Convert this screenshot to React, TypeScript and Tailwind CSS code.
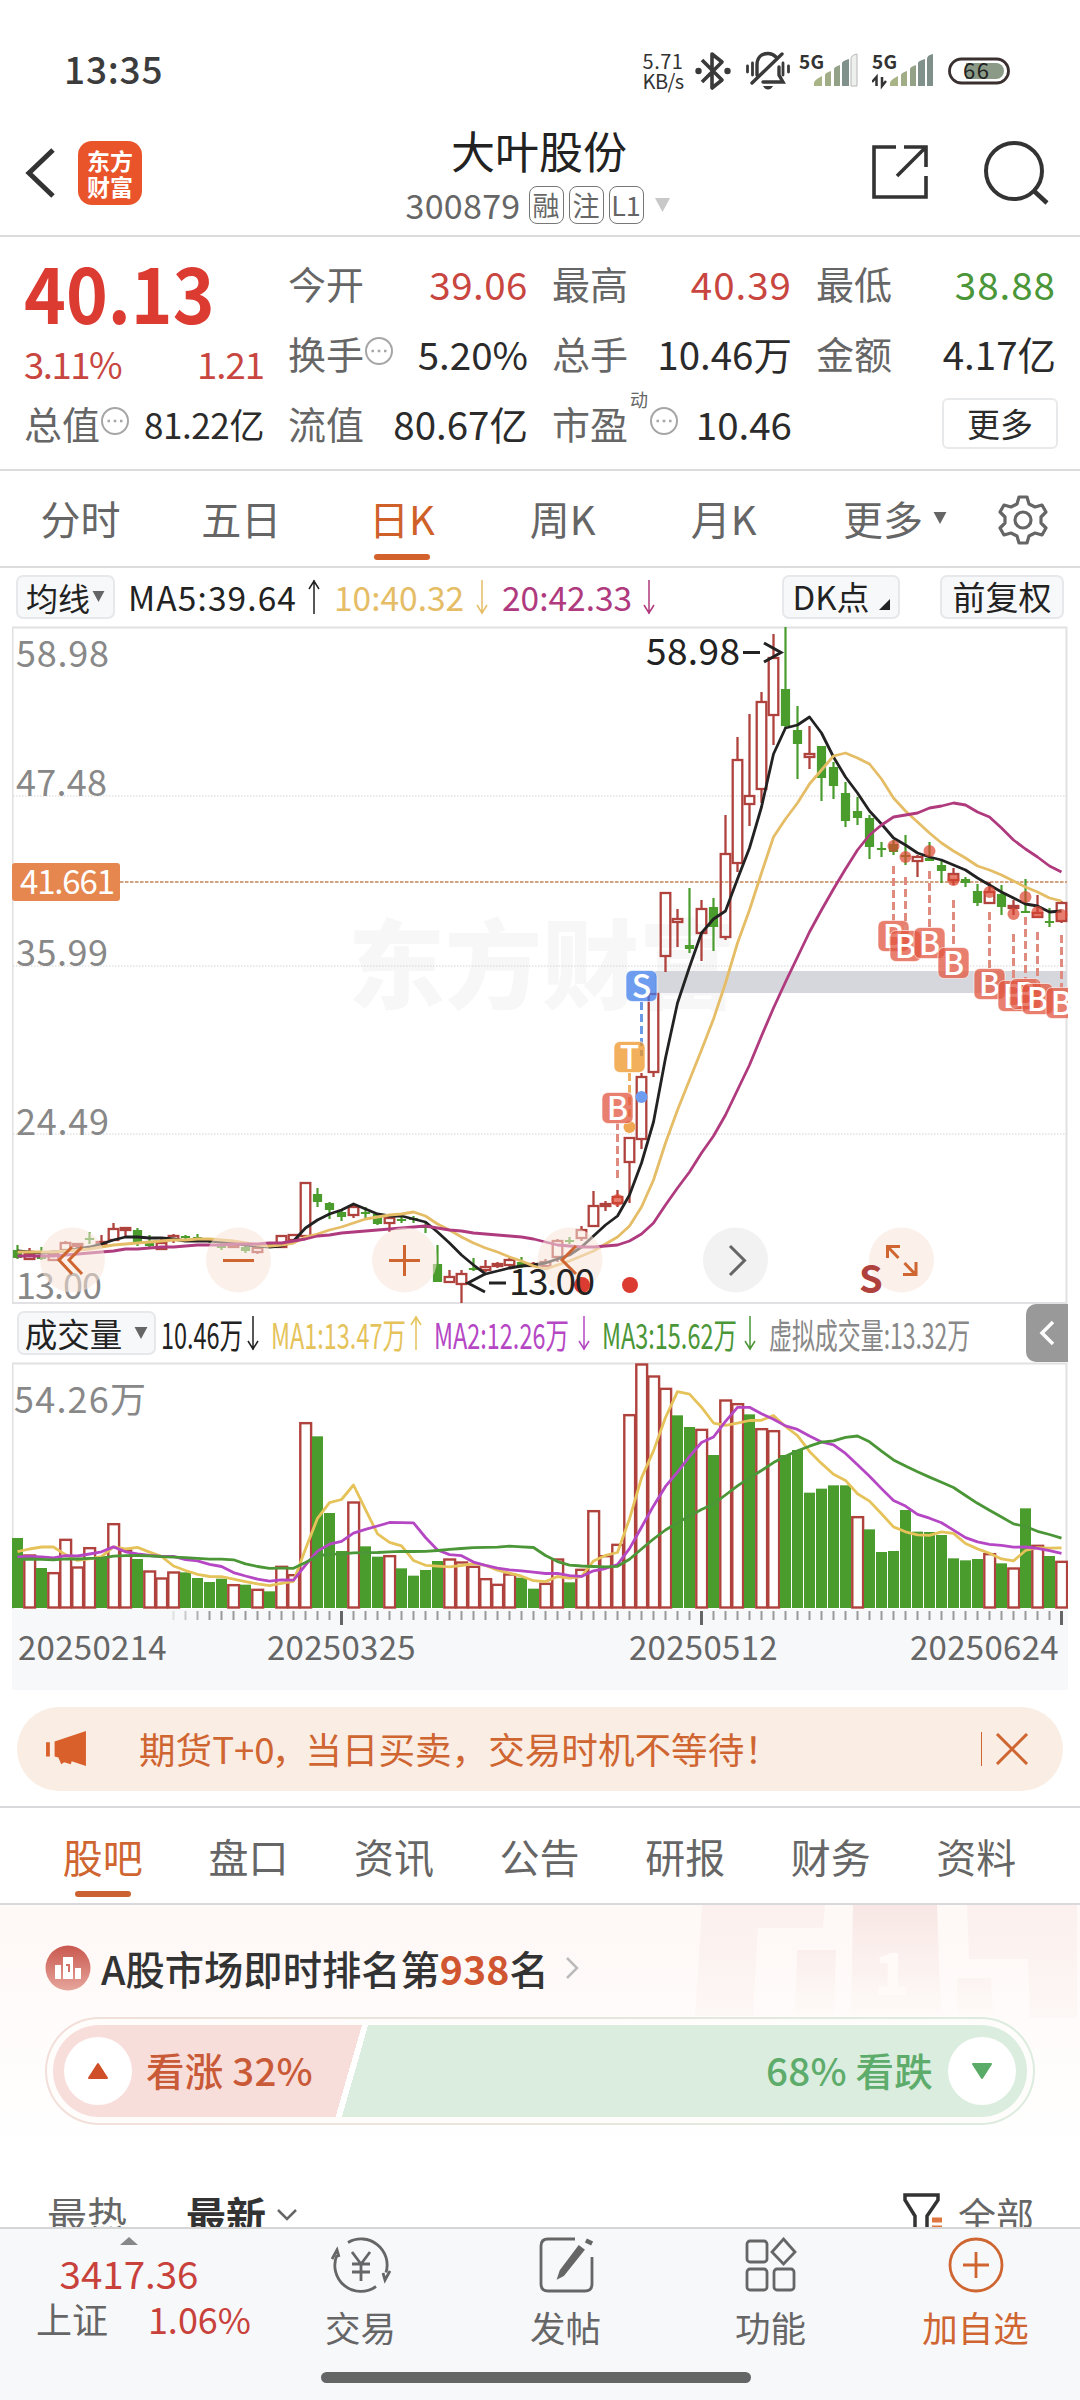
import { Fragment, type ReactNode } from 'react'
import { clsx } from 'clsx'

const RED = '#b0423d'
const GREEN = '#4a9d2d'

// x centre of the n-th trading day
const dayX = (i: number) => 17.5 + i * 12

// [high, body top, body bottom, low] per day
const candles = [
  [1245, 1250, 1258, 1259], [1248, 1254, 1259, 1260], [1247, 1257, 1259, 1260], [1252, 1254, 1260, 1260],
  [1241, 1243, 1250, 1252], [1243, 1244, 1246, 1252], [1232, 1238, 1240, 1244], [1235, 1242, 1244, 1248],
  [1223, 1229, 1240, 1240], [1227, 1228, 1230, 1237], [1228, 1230, 1244, 1246], [1235, 1243, 1246, 1247],
  [1237, 1243, 1249, 1249], [1234, 1236, 1239, 1243], [1235, 1236, 1238, 1242], [1234, 1237, 1239, 1241],
  [1238, 1240, 1242, 1243], [1242, 1245, 1248, 1250], [1243, 1245, 1247, 1248], [1246, 1247, 1251, 1253],
  [1245, 1248, 1252, 1254], [1243, 1244, 1246, 1248], [1235, 1236, 1247, 1247], [1234, 1235, 1240, 1243],
  [1183, 1183, 1236, 1236], [1188, 1194, 1202, 1207], [1202, 1203, 1210, 1219], [1211, 1212, 1217, 1221],
  [1205, 1207, 1215, 1218], [1207, 1212, 1213, 1218], [1214, 1214, 1224, 1225], [1215, 1218, 1223, 1232],
  [1215, 1219, 1221, 1223], [1216, 1218, 1220, 1223], [1222, 1226, 1227, 1233], [1245, 1264, 1282, 1282],
  [1270, 1277, 1282, 1283], [1270, 1274, 1284, 1303], [1258, 1268, 1270, 1271], [1260, 1267, 1270, 1272],
  [1262, 1264, 1266, 1268], [1257, 1260, 1265, 1267], [1257, 1262, 1267, 1268], [1262, 1264, 1266, 1267],
  [1259, 1262, 1266, 1267], [1239, 1241, 1257, 1262], [1237, 1240, 1241, 1244], [1226, 1230, 1238, 1241],
  [1191, 1206, 1226, 1227], [1201, 1204, 1206, 1211], [1190, 1197, 1203, 1207], [1138, 1138, 1162, 1203],
  [1073, 1077, 1139, 1149], [994, 994, 1072, 1077], [893, 893, 956, 972], [909, 919, 922, 947],
  [888, 945, 949, 953], [900, 909, 933, 961], [898, 907, 927, 951], [815, 854, 937, 940],
  [737, 760, 863, 872], [714, 796, 804, 826], [692, 702, 789, 803], [634, 658, 715, 745],
  [627, 689, 726, 728], [706, 730, 744, 779], [726, 754, 757, 769], [746, 746, 778, 801],
  [762, 767, 786, 799], [782, 793, 821, 827], [797, 811, 818, 825], [815, 818, 847, 859],
  [842, 848, 850, 857], [840, 844, 852, 855], [835, 855, 856, 865], [855, 857, 861, 877],
  [842, 858, 861, 861], [859, 865, 871, 883], [868, 874, 880, 885], [877, 879, 883, 887],
  [884, 891, 903, 906], [882, 892, 903, 904], [885, 894, 907, 915], [900, 906, 908, 915],
  [879, 911, 913, 913], [895, 913, 917, 918], [908, 921, 922, 927], [901, 903, 921, 923],
]
// r = rising (hollow), g = falling (solid), ten days per group
const candleSide = ['grgrrrgrrr', 'ggrrggggrg', 'rgrrrgggrg', 'grggggrrgr', 'rrgrrrgrrr', 'rrrrrrgrgr', 'rrrrggrggg', 'gggggrggrg', 'grgrgrgr'].join('')

const ma5 = [
  1251, 1252, 1253, 1252, 1251, 1249, 1247, 1244, 1240, 1237, 1237, 1238, 1238, 1239, 1241, 1241, 1241, 1242, 1243,
  1245, 1246, 1247, 1246, 1241, 1228, 1220, 1214, 1210, 1204, 1209, 1214, 1216, 1216, 1219, 1222, 1232, 1243, 1255,
  1265, 1274, 1271, 1268, 1266, 1265, 1263, 1259, 1255, 1247, 1236, 1225, 1216, 1195, 1163, 1122, 1058, 1003, 967,
  933, 919, 911, 879, 848, 807, 754, 728, 725, 717, 733, 757, 777, 793, 811, 824, 838, 845, 853, 857, 860, 865, 870,
  878, 885, 892, 898, 904, 906, 912, 911,
]
const ma10 = [
  1252, 1252, 1252, 1252, 1251, 1250, 1249, 1247, 1245, 1244, 1243, 1242, 1241, 1240, 1240, 1239, 1239, 1240, 1241,
  1243, 1245, 1246, 1245, 1243, 1237, 1234, 1230, 1227, 1223, 1219, 1217, 1215, 1214, 1212, 1216, 1224, 1230, 1237,
  1243, 1248, 1252, 1257, 1261, 1266, 1269, 1265, 1261, 1256, 1251, 1244, 1237, 1226, 1207, 1180, 1143, 1110, 1080,
  1050, 1019, 983, 943, 910, 873, 837, 819, 803, 784, 770, 756, 753, 758, 764, 779, 798, 811, 822, 833, 843, 851, 858,
  866, 870, 875, 881, 887, 892, 898, 901,
]
const ma20 = [
  1256, 1256, 1256, 1256, 1255, 1254, 1253, 1252, 1251, 1249, 1249, 1248, 1247, 1247, 1246, 1245, 1245, 1245, 1244,
  1244, 1244, 1243, 1243, 1241, 1239, 1236, 1235, 1233, 1232, 1231, 1230, 1229, 1228, 1227, 1226, 1228, 1230, 1231,
  1233, 1234, 1235, 1236, 1237, 1239, 1242, 1245, 1246, 1247, 1247, 1246, 1245, 1241, 1234, 1223, 1205, 1188, 1172,
  1153, 1136, 1115, 1090, 1065, 1036, 1008, 982, 957, 932, 910, 889, 869, 850, 835, 825, 817, 815, 813, 808, 806, 803,
  805, 812, 817, 828, 840, 849, 857, 866, 872,
]

// volume bar tops in thirds of a pixel, preceded by the sessions left of the visible window
const volumeHistory = [635, 635, 635, 635, 635, 635, 635, 635, 635, 635, 637, 637, 637, 637, 637, 655, 684, 668, 454]
const volumes = [
  564, 615, 654, 668, 568, 651, 593, 620, 521, 600, 627, 663, 684, 666, 667, 684, 696, 686, 704, 704, 718, 724, 649,
  674, 218, 259, 489, 603, 456, 589, 620, 617, 655, 677, 660, 633, 627, 636, 649, 686, 703, 672, 683, 716, 700, 627,
  697, 658, 482, 617, 583, 194, 42, 78, 115, 196, 231, 238, 315, 150, 161, 193, 236, 242, 315, 300, 428, 416, 406,
  406, 500, 538, 606, 603, 480, 545, 546, 555, 625, 631, 627, 611, 640, 654, 475, 586, 618, 634,
]
const volumeSide = ['grgrrrrgrr', 'grrrggggrg', 'rgrrrgggrg', 'grggggrrrr', 'rrggrrgrrr', 'rrrrrggrgr', 'rgrrgggggg', 'rggggggggg', 'grgrgrgr'].join('')

const volumeMa = (n: number) => {
  const all = [...volumeHistory, ...volumes]
  return volumes.map((_, i) => {
    const end = i + volumeHistory.length + 1
    return 1350 + all.slice(end - n, end).reduce((a, b) => a + b, 0) / n / 3
  })
}

const toPoints = (ys: number[]) => ys.map((y, i) => `${dayX(i)},${y.toFixed(1)}`).join(' ')

// [day, dot y, badge y]
const buyMarks = [
  [50, 1200, 1108], [73, 846, 936], [74, 857, 946], [76, 851, 943], [78, 880, 963],
  [81, 892, 984], [83, 914, 996], [84, 897, 994], [85, 912, 999], [87, 915, 1003],
]

function Mark({ x, y, letter, color }: { x: number; y: number; letter: string; color: string }) {
  return (
    <g>
      <rect x={x - 15.5} y={y - 15.5} width="31" height="31" rx="6" fill={color} fillOpacity="0.75" stroke="#fff" strokeOpacity="0.6" />
      <text x={x} y={y + 11.5} textAnchor="middle" fontSize="32" fontWeight="500" fill="#fff">{letter}</text>
    </g>
  )
}

function PriceChart() {
  return (
    <svg className="mx-3 block h-[678px] w-[1056px] shrink-0" viewBox="12 626 1056 678">
      <text x="348" y="1001" fontSize="97" fontWeight="900" fill="#f7f7f7">东方财富</text>
      <path d="M12.5 627.5H1066.5V1303H12.5Z" fill="none" stroke="#e1e1e3" strokeWidth="2" />
      {[796, 966, 1134].map((y) => (
        <line key={y} x1="13" x2="1067" y1={y} y2={y} stroke="#d4d4d4" strokeDasharray="1.5 1.5" />
      ))}
      <rect x="655" y="971" width="412" height="22" fill="#d6d7dc" />
      <line x1="120" x2="1067" y1="882" y2="882" stroke="#d3a27e" strokeWidth="1.8" strokeDasharray="3.5 1.5" />

      {/* candles */}
      {candles.map(([high, top, bottom, low], i) => {
        const x = dayX(i)
        const up = candleSide[i] === 'r'
        const h = Math.max(bottom - top, 2)
        return up ? (
          <g key={i} fill="none" stroke={RED} strokeWidth="2.3">
            <path d={`M${x} ${high}V${top}M${x} ${bottom}V${low}`} />
            <rect x={x - 4.8} y={top} width="9.6" height={h} />
          </g>
        ) : (
          <g key={i} fill={GREEN}>
            <rect x={x - 1.1} y={high} width="2.2" height={low - high} />
            <rect x={x - 4.6} y={top} width="9.2" height={h} />
          </g>
        )
      })}

      <g fill="none" strokeWidth="2.8" strokeLinejoin="round">
        <polyline points={toPoints(ma5)} stroke="#222" />
        <polyline points={toPoints(ma10)} stroke="#e5bd66" />
        <polyline points={toPoints(ma20)} stroke="#b03a7e" />
      </g>

      {/* trade marks */}
      <line x1={dayX(52)} x2={dayX(52)} y1="1002" y2="1056" stroke="#6d9ae6" strokeWidth="3" strokeDasharray="8 4" />
      <line x1={dayX(51)} x2={dayX(51)} y1="1073" y2="1125" stroke="#eeb060" strokeWidth="3" strokeDasharray="8 4" />
      <circle cx={dayX(52)} cy="1097" r="6" fill="#6c9df0" />
      <circle cx={dayX(51)} cy="1127" r="6" fill="#efa751" />
      {buyMarks.map(([day, dot, badge]) => (
        <g key={day}>
          <line
            x1={dayX(day)}
            x2={dayX(day)}
            y1={badge > dot ? dot + 20 : dot - 22}
            y2={badge > dot ? badge - 15 : badge + 15}
            stroke="#df8b7f"
            strokeWidth="3"
            strokeDasharray="8 4"
          />
          <circle cx={dayX(day)} cy={dot} r="6" fill="#dc4631" fillOpacity="0.7" />
          <Mark x={dayX(day)} y={badge} letter="B" color="#e2553f" />
        </g>
      ))}
      <Mark x={dayX(52)} y={986} letter="S" color="#3d7ceb" />
      <Mark x={dayX(51)} y={1057} letter="T" color="#ee9525" />

      {/* axis labels */}
      <g fontSize="36" fill="#888">
        <text x="16" y="667" textLength="93">58.98</text>
        <text x="16" y="796" textLength="91">47.48</text>
        <text x="16" y="966" textLength="92">35.99</text>
        <text x="16" y="1135" textLength="93">24.49</text>
        <text x="16" y="1299" textLength="86">13.00</text>
      </g>
      <rect x="12" y="863" width="108" height="38" rx="3" fill="#e6874f" />
      <text x="20" y="894" fontSize="33" fill="#fff" textLength="95">41.661</text>

      {/* floating controls */}
      <g fill="#f7e3d8" fillOpacity="0.55">
        {[72.5, 238.5, 404.5, 570, 901.5].map((x) => <circle key={x} cx={x} cy="1260" r="32.5" />)}
      </g>
      <circle cx="735.5" cy="1260" r="32.5" fill="#f2f2f2" />
      <g fill="none" stroke="#cf6531" strokeWidth="3">
        <path d="M72 1247L59 1260L72 1274M82 1247L69 1260L82 1274" />
        <path d="M223 1260.5H254M389 1260.5H420M404.5 1245V1276" />
        <path d="M576 1246L562 1260L576 1274" />
        <path d="M887.5 1258V1246.5H900M888 1247L898.5 1258M916 1262V1274.5H903M915 1274L904.5 1263" />
      </g>
      <path d="M730 1246L744.5 1260.5L730 1275" fill="none" stroke="#666" strokeWidth="3" />
      <circle cx="582" cy="1285" r="8" fill="#dc3b31" />
      <circle cx="630" cy="1285" r="8" fill="#dc3b31" />
      <text x="859" y="1293" fontSize="38" fontWeight="700" fill={RED}>S</text>

      {/* high and low callouts */}
      <g fontSize="37" fill="#222">
        <text x="646" y="665" textLength="94">58.98</text>
        <text x="509" y="1295" textLength="86">13.00</text>
        <g fill="none" stroke="#222" strokeWidth="3">
          <path d="M743 652.5H760M764 643L781 652.5L764 662M506 1283H489M485 1274L468 1283L485 1292" />
        </g>
      </g>
    </svg>
  )
}

function VolumeChart() {
  return (
    <svg className="mx-3 block h-[247px] w-[1056px] shrink-0" viewBox="12 1362 1056 247">
      <path d="M12.5 1609V1363.5H1066.5V1609" fill="none" stroke="#e1e1e3" strokeWidth="2" />
      <text x="14" y="1413" fontSize="36" fill="#888" textLength="132">54.26万</text>
      {volumes.map((v, i) => {
        const y = 1350 + v / 3
        return volumeSide[i] === 'r' ? (
          <rect key={i} x={dayX(i) - 5.2} y={y + 0.5} width="10.8" height={1607 - y} fill="#fff" stroke={RED} strokeWidth="2.4" />
        ) : (
          <rect key={i} x={dayX(i) - 5.5} y={y} width="11" height={1608 - y} fill={GREEN} />
        )
      })}
      <g fill="none" strokeWidth="2.8" strokeLinejoin="round">
        <polyline points={toPoints(volumeMa(5))} stroke="#e5c35a" />
        <polyline points={toPoints(volumeMa(10))} stroke="#b547c4" />
        <polyline points={toPoints(volumeMa(20))} stroke="#4b9637" />
      </g>
    </svg>
  )
}

function DateAxis() {
  return (
    <div className="mx-3 flex h-[81px] w-[1056px] shrink-0 flex-col bg-[#f7f8fa]">
      <svg className="block h-[18px] w-full" viewBox="12 1609 1056 18">
        {volumes.map((_, i) => {
          const major = i === 27 || i === 57 || i === 87
          return i < 13 ? null : (
            <rect
              key={i}
              x={dayX(i) - (major ? 1.5 : 1)}
              y="1611"
              width={major ? 3 : 2}
              height={major ? 14 : 9}
              fill={major ? '#666' : '#999'}
              opacity={i < 16 ? (i - 12) * 0.25 : 1}
            />
          )
        })}
      </svg>
      <div className="flex h-[38px] items-center pr-2 pl-[6px] text-[33px] leading-none tracking-[0.3px] text-[#666]">
        <span className="w-[249px]">20250214</span>
        <span className="w-[362px]">20250325</span>
        <span className="w-[281px]">20250512</span>
        <span>20250624</span>
      </div>
    </div>
  )
}

function Arrow({ up, className }: { up?: boolean; className?: string }) {
  return (
    <svg className={clsx('h-[38px] w-[14px] shrink-0', className)} viewBox="0 0 14 38" fill="none" stroke="currentColor" strokeWidth="1.5">
      <path d={up ? 'M7 36V2M2 11L7 3L12 11' : 'M7 2V36M2 27L7 35L12 27'} />
    </svg>
  )
}

function Caret({ className }: { className?: string }) {
  return (
    <svg className={className} viewBox="0 0 14 13" fill="currentColor">
      <path d="M0 0H14L7 13Z" />
    </svg>
  )
}

function More() {
  return (
    <svg className="-mt-[5px] h-[30px] w-[30px]" viewBox="0 0 30 30" fill="none" stroke="#a6a6a6" strokeWidth="2">
      <circle cx="15" cy="15" r="13" />
      <path d="M7.5 15H10M13.7 15H16.3M20 15H22.5" strokeWidth="2.6" />
    </svg>
  )
}

const signalBars = [
  'M0 32V29Q0 26 8 22V32Z',
  'M11 32V21Q11 19 17 17V32Z',
  'M20 32V15Q20 13 26 11V32Z',
  'M28 32V9Q28 7 35 5V32Z',
  'M37 32V5Q37 1 43 0V32Z',
]
const barColors = ['#a9b486', '#a1ad86', '#93a187', '#80908a', '#7f8f89']

function Signal({ level }: { level: number }) {
  return (
    <svg className="h-[38px] w-[62px]" viewBox="0 0 62 38">
      <text x="0" y="17" fontSize="19" fontWeight="700" fill="#333" textLength="25">5G</text>
      <g transform={level === 5 ? 'translate(18 2)' : 'translate(15 2)'}>
        {signalBars.map((d, i) => (
          <path key={d} d={d} fill={i < level ? barColors[i] : '#eef0ee'} stroke={i < level ? 'none' : '#b5b8b5'} />
        ))}
      </g>
      {level === 5 && <path d="M4.5 34V25L0 30M10 25V34L14 29" stroke="#333" strokeWidth="2.5" fill="none" />}
    </svg>
  )
}

function StatusBar() {
  return (
    <header className="flex h-[104px] shrink-0 items-end pr-[70px] pl-[64px]">
      <span className="mb-[17px] text-[37px] leading-none font-medium tracking-[0.8px] text-[#3c3c3c]">13:35</span>
      <div className="mb-[13px] ml-auto flex items-center text-[#333]">
        <div className="w-[46px] text-center text-[20px] leading-[20px]">
          <div className="tracking-[0.5px]">5.71</div>
          <div className="tracking-[-0.6px]">KB/s</div>
        </div>
        <svg className="ml-[9px] h-[40px] w-[36px]" viewBox="0 0 36 40" fill="none" stroke="#3a3a3a" strokeWidth="3.6" strokeLinejoin="round">
          <path d="M7 9L27 29L17 37V3L27 11L7 31" />
          <circle cx="3.5" cy="20" r="3.2" fill="#3a3a3a" stroke="none" />
          <circle cx="32.5" cy="20" r="3.2" fill="#3a3a3a" stroke="none" />
        </svg>
        <svg className="ml-[15px] h-[40px] w-[44px]" viewBox="0 0 44 40" fill="none" stroke="#3a3a3a" strokeWidth="3.4" strokeLinecap="round">
          <path d="M36 3L6 32M11 24V14C11 6 16 2.5 22 2.5C25 2.5 28 4 30 6M33 16V24L37 31H17" />
          <path d="M1.5 15V21M6.5 12V24M37 12V24M42.5 15V21" strokeWidth="2.8" />
          <path d="M17 35H27Q25 38.5 22 38.5T17 35Z" fill="#3a3a3a" stroke="none" />
        </svg>
        <span className="ml-[9px] w-[60px]"><Signal level={4} /></span>
        <span className="ml-[13px] w-[62px]"><Signal level={5} /></span>
        <svg className="ml-[14px] h-[28px] w-[62px]" viewBox="0 0 62 28">
          <rect x="1.5" y="2" width="59" height="24" rx="12" fill="#fff" stroke="#3a3030" strokeWidth="2.8" />
          <path d="M18 6H48A8 8 0 0 1 48 22H18Z" fill="#8a9a86" />
          <text x="15" y="22" fontSize="22" fill="#222" textLength="26">66</text>
        </svg>
      </div>
    </header>
  )
}

function TitleBar() {
  return (
    <div className="flex h-[133px] shrink-0 items-center border-b-2 border-[#dcdcdc] px-[24px]">
      <svg className="mt-[6px] h-[52px] w-[34px]" viewBox="0 0 34 52" fill="none" stroke="#333" strokeWidth="5">
        <path d="M29 3L5 26L29 49" />
      </svg>
      <div className="mt-[6px] ml-[20px] flex h-[64px] w-[64px] flex-col items-center justify-center rounded-[14px] bg-[#e9542a] text-[23px] leading-[26px] font-bold text-white">
        <span>东方</span>
        <span>财富</span>
      </div>
      <div className="ml-[244px] flex w-[306px] flex-col items-center pt-[8px]">
        <h1 className="text-[44px] leading-[54px] text-[#222]">大叶股份</h1>
        <div className="mt-[8px] flex items-center gap-[5px] text-[#666]">
          <span className="mr-[3px] text-[34px] leading-[40px] tracking-[0.3px]">300879</span>
          {['融', '注', 'L1'].map((tag) => (
            <span key={tag} className="flex h-[38px] w-[35px] items-center justify-center rounded-[8px] border border-[#777] text-[27px] leading-none">
              {tag}
            </span>
          ))}
          <Caret className="ml-[3px] h-[14px] w-[21px] text-[#c8c8c8]" />
        </div>
      </div>
      <svg className="mt-[5px] ml-auto h-[58px] w-[60px]" viewBox="0 0 60 58" fill="none" stroke="#333" strokeWidth="3.6">
        <path d="M26 4H4V54H56V33M34 4H56V24M55 5L27 33" />
      </svg>
      <svg className="mt-[6px] mr-[6px] ml-[52px] h-[66px] w-[68px]" viewBox="0 0 68 66" fill="none" stroke="#333" strokeWidth="4">
        <circle cx="32" cy="31" r="28" />
        <path d="M52 51L65 63" strokeWidth="4.5" />
      </svg>
    </div>
  )
}

function Cell({ label, value, tone = 'text-[#2b2b2b]', children }: { label: string; value: string; tone?: string; children?: ReactNode }) {
  return (
    <div className="flex h-[70px] w-[240px] items-center">
      <span className="text-[38px] leading-none text-[#666]">{label}</span>
      {children}
      <span className={clsx('ml-auto text-[38.5px] leading-none whitespace-nowrap', tone)}>{value}</span>
    </div>
  )
}

function Quote() {
  return (
    <section className="flex h-[234px] shrink-0 border-b-2 border-[#dcdcdc] pt-[11px] pl-[24px]">
      <div className="w-[240px]">
        <div className="flex h-[88px] items-center text-[78px] leading-none font-bold text-[#dc3b31]">
          <span className="-mt-[4px] origin-left scale-x-[0.91]">40.13</span>
        </div>
        <div className="mt-[4px] flex h-[48px] items-center justify-between text-[36.5px] leading-none text-[#c8463f]">
          <span className="tracking-[-1.5px]">3.11%</span>
          <span className="tracking-[-1px]">1.21</span>
        </div>
        <div className="flex h-[70px] items-center">
          <span className="text-[38px] leading-none text-[#666]">总值</span>
          <More />
          <span className="ml-auto text-[35px] leading-none tracking-[-0.4px] whitespace-nowrap text-[#2b2b2b]">81.22亿</span>
        </div>
      </div>
      <div className="ml-[24px] flex w-[768px] flex-wrap content-start gap-x-[24px]">
        <Cell label="今开" value="39.06" tone="text-[#c8463f] tracking-[0.5px]" />
        <Cell label="最高" value="40.39" tone="text-[#c8463f] tracking-[1px]" />
        <Cell label="最低" value="38.88" tone="text-[#4a9638] tracking-[1px]" />
        <Cell label="换手" value="5.20%"><More /></Cell>
        <Cell label="总手" value="10.46万" />
        <Cell label="金额" value="4.17亿" />
        <Cell label="流值" value="80.67亿" />
        <Cell label="市盈" value="10.46">
          <sup className="-mt-[30px] mr-px ml-[2px] text-[18px] leading-none text-[#666]">动</sup>
          <More />
        </Cell>
        <div className="flex h-[70px] w-[240px] items-center justify-end">
          <button className="-mr-[2px] flex h-[51px] w-[116px] items-center justify-center rounded-[6px] border-2 border-[#e8e9eb] text-[33px] leading-none text-[#2b2b2b]">更多</button>
        </div>
      </div>
    </section>
  )
}

function PeriodTabs() {
  return (
    <nav className="flex h-[97px] shrink-0 items-start border-b-2 border-[#dcdcdc] text-[40px] text-[#666]">
      {['分时', '五日', '日K', '周K', '月K'].map((t) => (
        <div key={t} className={clsx('flex w-[160.8px] flex-col items-center pt-[22px]', t === '日K' && 'text-[#cf6029]')}>
          <span className="leading-[50px]">{t}</span>
          {t === '日K' && <span className="mt-[11px] h-[6px] w-[56px] rounded-full bg-[#d3612c]" />}
        </div>
      ))}
      <div className="ml-[39px] flex items-center pt-[22px]">
        <span className="leading-[50px]">更多</span>
        <Caret className="ml-[10px] h-[12px] w-[14px]" />
      </div>
      <svg className="mt-[23px] mr-[31px] ml-auto h-[52px] w-[52px]" viewBox="0 0 52 52" fill="none" stroke="#666" strokeWidth="3.2" strokeLinejoin="round">
        <path d="M22 3H30L32 10L38 13L45 11L49 18L44 23V29L49 34L45 41L38 39L32 42L30 49H22L20 42L14 39L7 41L3 34L8 29V23L3 18L7 11L14 13L20 10Z" />
        <circle cx="26" cy="26" r="8" />
      </svg>
    </nav>
  )
}

const chip = 'flex h-[44px] items-center justify-center rounded-[7px] border-2 border-[#e6e8eb] bg-[#f7f8fa] leading-none text-[#222]'

function AverageRow() {
  return (
    <div className="flex h-[58px] shrink-0 items-center pr-[16px] pb-px pl-[16px] text-[33.5px] leading-none whitespace-nowrap">
      <button className={clsx(chip, 'w-[99px] text-[32px]')}>
        均线<Caret className="ml-[2px] h-[11px] w-[13px] text-[#666]" />
      </button>
      <span className="ml-[13px] w-[171px] tracking-[1.1px] text-[#222]">MA5:39.64</span>
      <Arrow up className="ml-[8px] text-[#222]" />
      <span className="ml-[13px] w-[135px] text-[#e5bd66]">10:40.32</span>
      <Arrow className="ml-[6px] text-[#e5bd66]" />
      <span className="ml-[13px] w-[138px] text-[#b03a7e]">20:42.33</span>
      <Arrow className="ml-[2px] text-[#b03a7e]" />
      <button className={clsx(chip, 'ml-auto w-[118px] text-[33px]')}>
        DK点
        <svg className="mt-[16px] ml-[9px] h-[11px] w-[11px]" viewBox="0 0 11 11"><path d="M11 0V11H0Z" fill="#222" /></svg>
      </button>
      <button className={clsx(chip, 'ml-[40px] w-[124px] text-[33px]')}>前复权</button>
    </div>
  )
}

const volumeStats = [
  { text: '10.46万', box: 'w-[85px]', tone: 'text-[#222]', up: false },
  { text: 'MA1:13.47万', box: 'w-[138px]', tone: 'text-[#e5c35a]', up: true },
  { text: 'MA2:12.26万', box: 'w-[143px]', tone: 'text-[#b547c4]', up: false },
  { text: 'MA3:15.62万', box: 'w-[141px]', tone: 'text-[#4b9637]', up: false },
]

function VolumeRow() {
  return (
    <div className="flex h-[58px] shrink-0 items-center pl-[17px] text-[35px] leading-none whitespace-nowrap">
      <button className={clsx(chip, 'mr-[5px] w-[139px] text-[32.5px]')}>
        成交量<Caret className="ml-[12px] h-[12px] w-[14px] text-[#666]" />
      </button>
      {volumeStats.map((s) => (
        <Fragment key={s.text}>
          <span className={clsx('shrink-0', s.box, s.tone)}>
            <span className="inline-block origin-left scale-x-[0.67]">{s.text}</span>
          </span>
          <Arrow up={s.up} className={clsx('mr-[11px]', s.tone)} />
        </Fragment>
      ))}
      <span className="ml-px w-[240px] text-[#888]">
        <span className="inline-block origin-left scale-x-[0.655]">虚拟成交量:13.32万</span>
      </span>
      <span className="mr-[12px] ml-auto flex h-[58px] w-[42px] shrink-0 items-center justify-center rounded-l-[10px] bg-[#999]">
        <svg className="h-[26px] w-[16px]" viewBox="0 0 16 26" fill="none" stroke="#fff" strokeWidth="3.5">
          <path d="M14 2L3 13L14 24" />
        </svg>
      </span>
    </div>
  )
}

function Banner() {
  return (
    <div className="mx-[17px] mt-[17px] flex h-[84px] shrink-0 items-center rounded-full bg-[#faede4] pr-[34px] pl-[27px] text-[#cf6531]">
      <svg className="h-[38px] w-[44px]" viewBox="0 0 44 40" fill="#d9602b">
        <path d="M1 13H5V28H1ZM10 12L43 1V38L28 33L27 36L20 34L17 36L14 29L10 28Z" />
      </svg>
      <span className="ml-[51px] text-[36.6px] leading-none">期货T+0<span className="mr-[-3px] ml-[-3px]">，</span>当日买卖，交易时机不等待！</span>
      <span className="ml-auto h-[34px] w-[1.5px] bg-[#cf6531]" />
      <svg className="ml-[13px] h-[32px] w-[34px]" viewBox="0 0 34 32" fill="none" stroke="#cf6531" strokeWidth="3">
        <path d="M2 1L32 31M32 1L2 31" />
      </svg>
    </div>
  )
}

function ContentTabs() {
  return (
    <nav className="mt-[15px] flex h-[99px] shrink-0 border-y-2 border-[#d9d9dc] pl-[30px] text-[40px] text-[#666]">
      {['股吧', '盘口', '资讯', '公告', '研报', '财务', '资料'].map((t, i) => (
        <div key={t} className={clsx('flex w-[145.6px] flex-col items-center pt-[23px]', i === 0 && 'text-[#cf6531]')}>
          <span className="leading-[50px]">{t}</span>
          {i === 0 && <span className="mt-[10px] h-[6px] w-[56px] rounded-full bg-[#cc6232]" />}
        </div>
      ))}
    </nav>
  )
}

function Sentiment() {
  return (
    <section className="relative flex h-[250px] shrink-0 flex-col bg-gradient-to-b from-[#fef8f6] to-white">
      <svg className="absolute top-0 right-0 h-[114px] w-[385px]" viewBox="695 1906 385 114">
        <defs>
          <linearGradient id="podium" x1="0" y1="0" x2="0" y2="1">
            <stop offset="0" stopColor="#f8e7e4" />
            <stop offset="1" stopColor="#fefaf8" />
          </linearGradient>
          <linearGradient id="podiumSide" x1="0" y1="0" x2="0" y2="1">
            <stop offset="0" stopColor="#fbf0ed" />
            <stop offset="1" stopColor="#fdf7f5" />
          </linearGradient>
        </defs>
        <path d="M702 1906H825L823 1929H758L753 2017H695ZM967 1906H1077V2019H1030L1028 1960H969Z" fill="url(#podiumSide)" />
        <path d="M853 1906H937L941 2015H851ZM797 1951H836L834 2015H795ZM957 1979H991L993 2015H957Z" fill="url(#podium)" />
        <text x="874" y="1996" fontSize="58" fontWeight="900" fill="#fffaf8">1</text>
      </svg>
      <div className="mt-[38px] ml-[45px] flex h-[50px] items-center">
        <svg className="h-[46px] w-[46px]" viewBox="0 0 46 46">
          <defs>
            <linearGradient id="badge" x1="0" y1="0" x2="0" y2="1">
              <stop offset="0" stopColor="#c9584f" />
              <stop offset="1" stopColor="#e6a59b" />
            </linearGradient>
          </defs>
          <circle cx="23" cy="23" r="22.5" fill="url(#badge)" />
          <path d="M10 20H16V34H10ZM18 12H28V34H18ZM30 23H36V34H30Z" fill="#fff" />
          <path d="M21 20H24V27" fill="none" stroke="#d07067" strokeWidth="2" />
        </svg>
        <span className="ml-[10px] text-[39.3px] leading-none font-medium whitespace-nowrap text-[#333]">
          A股市场即时排名第<b className="font-bold text-[#cf5630]">938</b>名
        </span>
        <svg className="ml-[16px] h-[24px] w-[14px]" viewBox="0 0 14 24" fill="none" stroke="#bbb" strokeWidth="2.5">
          <path d="M2 2L12 12L2 22" />
        </svg>
      </div>
      <div className="mt-[24px] ml-[45px] h-[108px] w-[990px] rounded-full bg-gradient-to-r from-[#f3dfda] to-[#dcecdf] p-[2px]">
        <div className="h-full rounded-full bg-[#fffdfc] p-[6px]">
          <div className="flex h-[92px] items-center overflow-hidden rounded-full bg-[linear-gradient(106deg,#f8dedb_0_297px,#fff_297px_303px,#dbeddf_303px)] px-[11px] text-[38.5px] leading-none font-medium">
            <span className="flex h-[68px] w-[68px] items-center justify-center rounded-full bg-white">
              <svg className="h-[18px] w-[22px]" viewBox="0 0 22 18"><path d="M11 2L20 16H2Z" fill="#cf5028" stroke="#cf5028" strokeWidth="2" strokeLinejoin="round" /></svg>
            </span>
            <span className="-mt-[3px] ml-[14px] tracking-[0.2px] text-[#c95a38]">看涨 32%</span>
            <span className="-mt-[3px] mr-[15px] ml-auto tracking-[0.2px] text-[#5eac6b]">68% 看跌</span>
            <span className="flex h-[68px] w-[68px] items-center justify-center rounded-full bg-white">
              <svg className="h-[18px] w-[22px]" viewBox="0 0 22 18"><path d="M2 2H20L11 16Z" fill="#59ab67" stroke="#59ab67" strokeWidth="2" strokeLinejoin="round" /></svg>
            </span>
          </div>
        </div>
      </div>
    </section>
  )
}

function PostFilter() {
  return (
    <div className="flex h-[72px] shrink-0 items-start overflow-hidden pr-[46px] pl-[47px] text-[40px] leading-[50px] text-[#666]">
      <span className="mt-[34px]">最热</span>
      <span className="mt-[34px] ml-[59px] font-bold text-[#333]">最新</span>
      <svg className="mt-[53px] ml-[10px] h-[14px] w-[22px]" viewBox="0 0 22 14" fill="none" stroke="#666" strokeWidth="2.5"><path d="M2 2L11 11L20 2" /></svg>
      <svg className="mt-[37px] ml-auto h-[50px] w-[42px]" viewBox="0 0 42 50" fill="none" stroke="#333" strokeWidth="3.5">
        <path d="M13 48V24L3 8V3H36V8L25 24V48" />
        <path d="M30 28H40M30 36H40" stroke="#e0763f" strokeWidth="5" />
      </svg>
      <span className="mt-[34px] ml-[14px] text-[38px]">全部</span>
    </div>
  )
}

const actions = [
  {
    label: '交易',
    icon: (
      <>
        <path d="M17 7.5A26 26 0 0 1 55 37.5M45 51.5A26 26 0 0 1 6 20" />
        <path d="M1 24L6 15L8 22M59 36L54 45L52 38" />
        <path d="M21 17L30 29L39 17M30 29V46M21 29H39M21 37H39" />
      </>
    ),
  },
  {
    label: '发帖',
    icon: (
      <>
        <path d="M39 4H12Q5 4 5 11V49Q5 56 12 56H49Q56 56 56 49V22" />
        <path d="M47 15L27 40L23 42L25 36L43 12Z" fill="currentColor" />
        <path d="M54 5L52 9" strokeWidth="7" />
      </>
    ),
  },
  {
    label: '功能',
    icon: (
      <>
        <rect x="6" y="6" width="20" height="21" rx="3" />
        <rect x="6" y="34" width="20" height="21" rx="3" />
        <rect x="33" y="34" width="20" height="21" rx="3" />
        <path d="M42.5 4L54 17L42.5 29L31 17Z" />
      </>
    ),
  },
  {
    label: '加自选',
    icon: (
      <>
        <circle cx="30" cy="30" r="26" />
        <path d="M30 17V43M17 30H43" />
      </>
    ),
  },
]

function BottomBar() {
  return (
    <footer className="flex h-[173px] shrink-0 flex-col border-t-2 border-[#d6d6d6] bg-[#f7f8fa]">
      <div className="flex h-[143px]">
        <div className="flex w-[258px] flex-col items-center leading-none">
          <svg className="mt-[8px] h-[8px] w-[18px]" viewBox="0 0 18 8"><path d="M9 0L18 8H0Z" fill="#888" /></svg>
          <span className="mt-[8px] text-[38.5px] text-[#c8413b]">3417.36</span>
          <div className="mt-[8px] flex w-full justify-between pr-[7px] pl-[36px] text-[36px] text-[#666]">
            <span>上证</span>
            <span className="text-[#c8413b]">1.06%</span>
          </div>
        </div>
        {actions.map((a) => (
          <div key={a.label} className={clsx('flex w-[205px] flex-col items-center pt-[6px]', a.label === '加自选' ? 'text-[#cf6531]' : 'text-[#666]')}>
            <svg className="h-[60px] w-[60px]" viewBox="0 0 60 60" fill="none" stroke="currentColor" strokeWidth="2.8">{a.icon}</svg>
            <span className="mt-[14px] text-[35.5px] leading-none">{a.label}</span>
          </div>
        ))}
      </div>
      <span className="ml-[321px] h-[11px] w-[430px] rounded-full bg-[#646665]" />
    </footer>
  )
}

export default function App() {
  return (
    <main className="flex h-[2400px] w-[1080px] flex-col overflow-hidden bg-white font-['Noto_Sans_CJK_SC',sans-serif]">
      <StatusBar />
      <TitleBar />
      <Quote />
      <PeriodTabs />
      <AverageRow />
      <PriceChart />
      <VolumeRow />
      <VolumeChart />
      <DateAxis />
      <Banner />
      <ContentTabs />
      <Sentiment />
      <PostFilter />
      <BottomBar />
    </main>
  )
}
